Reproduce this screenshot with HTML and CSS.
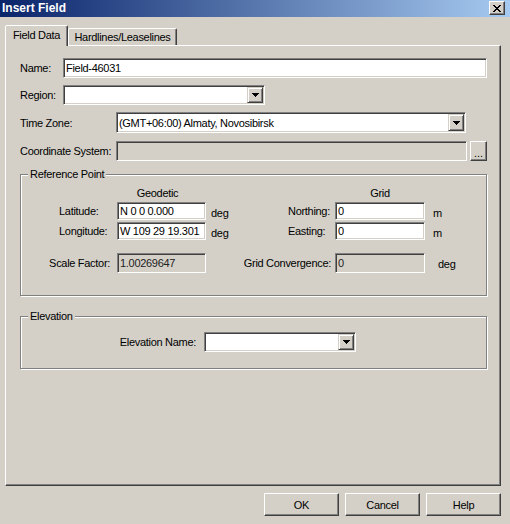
FILE: index.html
```html
<!DOCTYPE html>
<html>
<head>
<meta charset="utf-8">
<title>Insert Field</title>
<link rel="stylesheet" href="styles.css">
</head>
<body>
<div class="window">
  <div class="titlebar">
    <span class="title">Insert Field</span>
    <span class="close"><svg width="8" height="7" viewBox="0 0 8 7"><path d="M0 0h2v1h-2zM6 0h2v1h-2zM1 1h2v1h-2zM5 1h2v1h-2zM2 2h4v1h-4zM3 3h2v1h-2zM2 4h4v1h-4zM1 5h2v1h-2zM5 5h2v1h-2zM0 6h2v1h-2zM6 6h2v1h-2z" fill="#000"/></svg></span>
  </div>
  <div class="tabstrip">
    <div class="tab active">Field Data</div>
    <div class="tab">Hardlines/Leaselines</div>
  </div>
  <div class="panel">
    <div class="row">
      <span class="lbl lbl-s">Name:</span>
      <div class="sunken edit grow">Field-46031</div>
    </div>
    <div class="row row-region">
      <span class="lbl lbl-s">Region:</span>
      <div class="sunken edit combo region"><span class="combo-text"></span><span class="dd"><svg width="7" height="4" viewBox="0 0 7 4"><path d="M0 0h7v1h-1v1h-1v1h-1v1h-1v-1h-1v-1h-1v-1h-1z" fill="#000"/></svg></span></div>
    </div>
    <div class="row row-tz">
      <span class="lbl lbl-l">Time Zone:</span>
      <div class="sunken edit combo tz"><span class="combo-text">(GMT+06:00) Almaty, Novosibirsk</span><span class="dd"><svg width="7" height="4" viewBox="0 0 7 4"><path d="M0 0h7v1h-1v1h-1v1h-1v1h-1v-1h-1v-1h-1v-1h-1z" fill="#000"/></svg></span></div>
    </div>
    <div class="row row-cs">
      <span class="lbl lbl-l">Coordinate System:</span>
      <div class="sunken ro grow"></div>
      <span class="raised dots">...</span>
    </div>

    <fieldset class="group refpoint">
      <legend>Reference Point</legend>
      <div class="rp-body">
        <div class="rp-row rp-head">
          <span class="hdr-geo">Geodetic</span>
          <span class="hdr-grid">Grid</span>
        </div>
        <div class="rp-row rp-lat">
          <span class="lbl-geo">Latitude:</span>
          <div class="sunken edit">N 0 0 0.000</div>
          <span class="unit-deg">deg</span>
          <span class="lbl-grid">Northing:</span>
          <div class="sunken edit">0</div>
          <span class="unit-m">m</span>
        </div>
        <div class="rp-row rp-lon">
          <span class="lbl-geo">Longitude:</span>
          <div class="sunken edit">W 109 29 19.301</div>
          <span class="unit-deg">deg</span>
          <span class="lbl-grid">Easting:</span>
          <div class="sunken edit">0</div>
          <span class="unit-m">m</span>
        </div>
        <div class="rp-row rp-scale">
          <span class="lbl-scale">Scale Factor:</span>
          <div class="sunken ro">1.00269647</div>
          <span class="lbl-conv">Grid Convergence:</span>
          <div class="sunken ro">0</div>
          <span class="unit-conv">deg</span>
        </div>
      </div>
    </fieldset>

    <fieldset class="group elevation">
      <legend>Elevation</legend>
      <div class="el-body">
        <span class="lbl-elev">Elevation Name:</span>
        <div class="sunken edit combo elev"><span class="combo-text"></span><span class="dd"><svg width="7" height="4" viewBox="0 0 7 4"><path d="M0 0h7v1h-1v1h-1v1h-1v1h-1v-1h-1v-1h-1v-1h-1z" fill="#000"/></svg></span></div>
      </div>
    </fieldset>
  </div>
  <div class="buttons">
    <span class="raised btn">OK</span>
    <span class="raised btn">Cancel</span>
    <span class="raised btn">Help</span>
  </div>
</div>
</body>
</html>
```

FILE: styles.css
```css
* { box-sizing: border-box; }
html, body { margin: 0; padding: 0; }
body {
  width: 510px;
  height: 524px;
  overflow: hidden;
  background: #d4d0c8;
  font-family: "Liberation Sans", Arial, sans-serif;
  font-size: 11px;
  letter-spacing: -0.3px;
  color: #000;
}
.window { width: 510px; height: 524px; }

.titlebar {
  height: 17px;
  display: flex;
  align-items: center;
  justify-content: space-between;
  padding: 0 5px 0 2px;
  background: linear-gradient(to right, #0a246a, #a6caf0);
}
.title {
  color: #fff;
  font-weight: bold;
  font-size: 12px;
  letter-spacing: 0;
  line-height: 17px;
}
.close {
  align-self: flex-start;
  margin-top: 1px;
  width: 16px;
  height: 14px;
  background: #d4d0c8;
  border: 1px solid;
  border-color: #fff #404040 #404040 #fff;
  box-shadow: inset -1px -1px #808080;
  display: flex;
  align-items: center;
  justify-content: center;
}
.close svg { display: block; }

.tabstrip {
  display: flex;
  align-items: flex-end;
  height: 20px;
  margin-top: 8px;
  padding-left: 5px;
}
.tab {
  width: 109px;
  height: 17px;
  border: 1px solid;
  border-bottom: none;
  border-color: #fff #404040 transparent #fff;
  box-shadow: inset -1px 0 #808080;
  border-radius: 2px 2px 0 0;
  display: flex;
  justify-content: center;
  padding-top: 2px;
  background: #d4d0c8;
  line-height: 13px;
}
.tab.active {
  width: 63px;
  height: 21px;
  margin-bottom: -1px;
  position: relative;
  z-index: 1;
  padding-top: 3px;
}

.panel {
  width: 496px;
  height: 441px;
  margin-left: 5px;
  border: 1px solid;
  border-color: #fff #404040 #404040 #fff;
  box-shadow: inset -1px -1px #808080;
  padding: 12px 13px 0 14px;
}

.row {
  display: flex;
  align-items: center;
  height: 20px;
}
.row-region { margin-top: 7px; }
.row-tz { margin-top: 7px; height: 21px; }
.row-cs { margin-top: 8px; }
.lbl { flex: none; }
.lbl-s { width: 43px; }
.lbl-l { width: 96px; }
.grow { flex: 1; }

.sunken {
  height: 100%;
  border: 1px solid;
  border-color: #808080 #fff #fff #808080;
  box-shadow: inset 1px 1px #404040, inset -1px -1px #d4d0c8;
  padding: 1px 1px 1px 2px;
  display: flex;
  align-items: center;
  white-space: nowrap;
  overflow: hidden;
}
.edit { background: #fff; }
.ro { background: #d4d0c8; color: #222; }

.combo { padding-right: 1px; }
.combo-text { flex: 1; }
.dd {
  flex: none;
  width: 16px;
  height: 100%;
  background: #d4d0c8;
  border: 1px solid;
  border-color: #d4d0c8 #404040 #404040 #d4d0c8;
  box-shadow: inset 1px 1px #fff, inset -1px -1px #808080;
  display: flex;
  align-items: center;
  justify-content: center;
}
.dd svg { display: block; }
.region { width: 202px; }
.tz { width: 350px; }
.elev { width: 152px; height: 20px; }

.raised {
  background: #d4d0c8;
  border: 1px solid;
  border-color: #fff #404040 #404040 #fff;
  box-shadow: inset -1px -1px #808080;
  display: flex;
  align-items: center;
  justify-content: center;
}
.dots {
  flex: none;
  width: 17px;
  height: 20px;
  margin-left: 3px;
  padding-top: 3px;
  letter-spacing: 0;
}

.group {
  margin: 7px 0 0;
  padding: 0;
  min-width: 0;
  width: 467px;
  border: 1px solid #808080;
  box-shadow: inset 1px 1px #fff, 1px 1px #fff;
}
.group legend {
  margin-left: 7px;
  padding: 0 2px;
  line-height: 12px;
  background: #d4d0c8;
}
.elevation { margin-top: 14px; }

.rp-body { padding: 6px 0 22px 23px; }
.rp-row {
  display: grid;
  grid-template-columns: 73px 89px 82px 47px 90px auto;
  align-items: center;
  height: 18px;
}
.rp-row .sunken { height: 18px; }
.rp-head { height: 13px; }
.rp-lat { margin-top: 3px; }
.rp-lon { margin-top: 2px; }
.rp-scale { margin-top: 13px; height: 20px; }
.rp-scale .sunken { height: 20px; }

.hdr-geo { grid-column: 2; text-align: center; padding-right: 8px; }
.hdr-grid { grid-column: 5; text-align: center; }
.lbl-geo { grid-column: 1; padding-left: 15px; }
.lbl-grid { grid-column: 4; }
.unit-deg { padding-left: 5px; padding-top: 3px; }
.unit-m { padding-left: 8px; padding-top: 3px; }
.lbl-scale { grid-column: 1; text-align: right; padding-right: 7px; }
.lbl-conv { grid-column: 3 / 5; text-align: right; padding-right: 4px; }
.unit-conv { grid-column: 6; padding-left: 13px; padding-top: 2px; }

.el-body {
  display: flex;
  align-items: center;
  padding: 10px 0 16px 0;
}
.lbl-elev { width: 183px; text-align: right; padding-right: 8px; }

.buttons {
  display: flex;
  justify-content: flex-end;
  gap: 6px;
  margin-top: 7px;
  padding-right: 9px;
}
.btn { width: 75px; height: 23px; }
```
